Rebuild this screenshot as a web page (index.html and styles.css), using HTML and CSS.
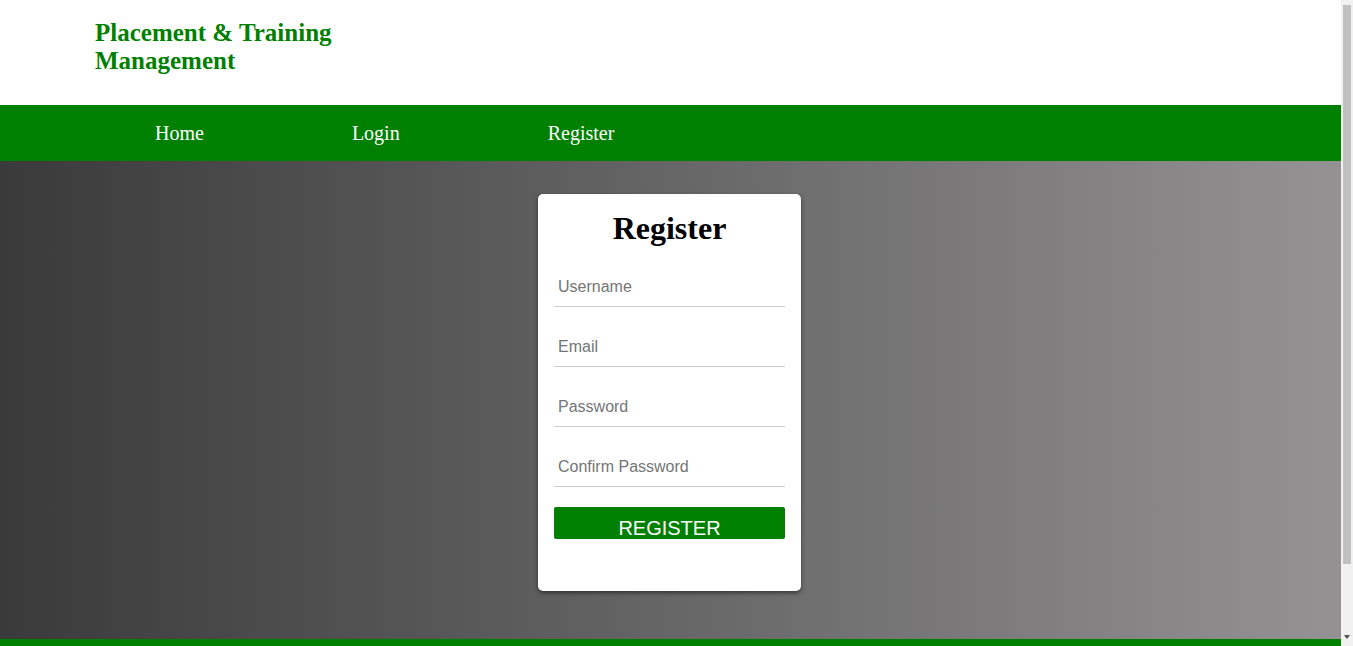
FILE: index.html
```html
<!DOCTYPE html>
<html lang="en">
<head>
<meta charset="utf-8">
<title>Register - Placement &amp; Training Management</title>
<link rel="stylesheet" href="styles.css">
</head>
<body>
<header class="site-header">
  <h2 class="brand">Placement &amp; Training<br>Management</h2>
</header>
<nav class="nav">
  <a class="nav-link" href="#">Home</a>
  <a class="nav-link" href="#">Login</a>
  <a class="nav-link" href="#">Register</a>
</nav>
<main class="main">
  <div class="card">
    <h1 class="card-title">Register</h1>
    <form class="form">
      <input class="field" type="text" placeholder="Username">
      <input class="field" type="email" placeholder="Email">
      <input class="field" type="password" placeholder="Password">
      <input class="field" type="password" placeholder="Confirm Password">
      <button class="btn" type="button">REGISTER</button>
    </form>
  </div>
</main>
<footer class="footer"></footer>
<div class="scroll-track" aria-hidden="true">
  <div class="scroll-thumb"></div>
  <div class="scroll-arrow"></div>
</div>
</body>
</html>
```
FILE: styles.css
```css
html {
  background: #f1f1f1;
}
html, body {
  margin: 0;
  padding: 0;
}
body {
  font-family: "Liberation Serif", "Times New Roman", serif;
  background: #fff;
  margin-right: 12px;
}
.site-header {
  height: 105px;
  box-sizing: border-box;
  padding: 19px 0 0 95px;
}
.brand {
  margin: 0;
  font-size: 25px;
  line-height: 28px;
  font-weight: bold;
  color: #008000;
}
.nav {
  height: 56px;
  background: #008000;
  display: flex;
  align-items: center;
  gap: 148px;
  padding-left: 155px;
}
.nav-link {
  color: #fff;
  text-decoration: none;
  font-size: 20px;
  line-height: 24px;
}
.main {
  background: linear-gradient(to right, #3a3a3a, #949292);
  padding: 33px 2px 48px 0;
}
.card {
  width: 263px;
  box-sizing: border-box;
  margin: 0 auto;
  background: #fff;
  border-radius: 5px;
  padding: 16px 16px 52px;
  box-shadow: 0 2px 4px rgba(0, 0, 0, 0.5);
}
.card-title {
  margin: 0 0 20px;
  font-size: 32px;
  line-height: 37px;
  text-align: center;
  color: #000;
}
.form {
  display: flex;
  flex-direction: column;
  gap: 20px;
}
.field {
  display: block;
  width: 100%;
  height: 40px;
  box-sizing: border-box;
  margin: 0;
  border: none;
  border-bottom: 1px solid #ccc;
  padding: 0 4px;
  font-family: "Liberation Sans", Arial, sans-serif;
  font-size: 16px;
  outline: none;
  background: transparent;
}
.field::placeholder {
  color: #757575;
}
.btn {
  display: block;
  width: 100%;
  height: 32px;
  box-sizing: border-box;
  margin: 0;
  border: none;
  border-radius: 2px;
  background: #008000;
  color: #fff;
  font-family: "Liberation Sans", Arial, sans-serif;
  font-size: 20px;
  line-height: 20px;
  padding: 9px 0 0;
  overflow: hidden;
  text-align: center;
}
.footer {
  height: 80px;
  background: #008000;
}
.scroll-track {
  position: fixed;
  top: 0;
  right: 0;
  width: 12px;
  height: 100vh;
  background: #f1f1f1;
}
.scroll-thumb {
  position: absolute;
  top: 5px;
  left: 2px;
  width: 8px;
  height: 559px;
  background: #c1c1c1;
}
.scroll-arrow {
  position: absolute;
  bottom: 7px;
  left: 3px;
  width: 0;
  height: 0;
  border-left: 3px solid transparent;
  border-right: 3px solid transparent;
  border-top: 4px solid #505050;
}
```
